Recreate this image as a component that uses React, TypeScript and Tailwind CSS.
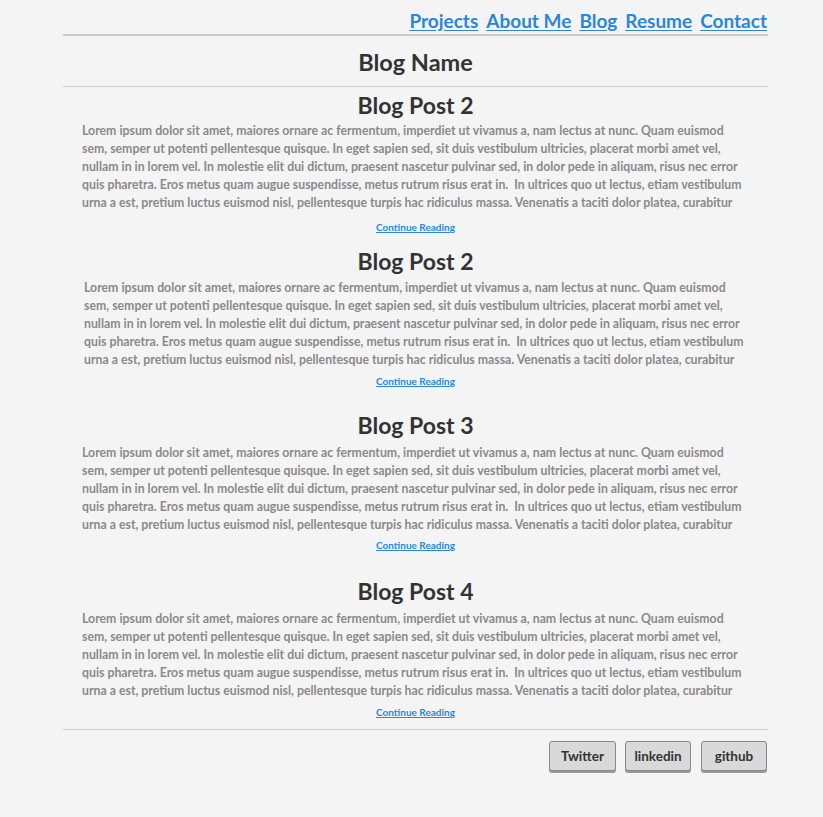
const LINES = [
  "Lorem ipsum dolor sit amet, maiores ornare ac fermentum, imperdiet ut vivamus a, nam lectus at nunc. Quam euismod",
  "sem, semper ut potenti pellentesque quisque. In eget sapien sed, sit duis vestibulum ultricies, placerat morbi amet vel,",
  "nullam in in lorem vel. In molestie elit dui dictum, praesent nascetur pulvinar sed, in dolor pede in aliquam, risus nec error",
  "quis pharetra. Eros metus quam augue suspendisse, metus rutrum risus erat in.\u00a0 In ultrices quo ut lectus, etiam vestibulum",
  "urna a est, pretium luctus euismod nisl, pellentesque turpis hac ridiculus massa. Venenatis a taciti dolor platea, curabitur",
];

// spacing per post is uneven in the original layout
const posts = [
  { id: 1, title: "Blog Post 2", top: "mt-[4px]", text: "mt-[3px] pl-[19px]", more: "mt-[7px]" },
  { id: 2, title: "Blog Post 2", top: "mt-[14px]", text: "mt-[4px] pl-[21px]", more: "mt-[4px]" },
  { id: 3, title: "Blog Post 3", top: "mt-[24px]", text: "mt-[5px] pl-[19px]", more: "mt-[3px]" },
  { id: 4, title: "Blog Post 4", top: "mt-[26px]", text: "mt-[5px] pl-[19px]", more: "mt-[4px]" },
];

const navLinks = ["Projects", "About Me", "Blog", "Resume", "Contact"];
const socials = [
  { label: "Twitter", w: "w-[67px]" },
  { label: "linkedin", w: "w-[66px] ml-[9px]" },
  { label: "github", w: "w-[66px] ml-[10px]" },
];

export default function App() {
  return (
    <div className="min-h-[817px] bg-[#f4f4f4] font-['Lato','Open_Sans',sans-serif]">
      <div className="ml-[63px] w-[705px]">
        <nav className="flex h-[36px] items-end justify-end gap-[8px] border-b-2 border-[#cccccc] pb-[2px] pr-[1px]">
          {navLinks.map((l) => (
            <a key={l} href="#" className="text-[19px] font-bold leading-[22px] text-[#2a87d8] underline underline-offset-2">
              {l}
            </a>
          ))}
        </nav>

        <header className="flex h-[51px] items-center justify-center border-b border-[#cccccc] pt-[1px]">
          <h1 className="text-[23.5px] font-bold leading-[28px] text-[#333333]">Blog Name</h1>
        </header>

        <main>
          {posts.map((p) => (
            <article key={p.id} className={p.top}>
              <h2 className="text-center text-[23px] font-bold leading-[28px] text-[#333333]">{p.title}</h2>
              <div className={`${p.text} text-[12.3px] font-bold leading-[18px] text-[#8a8a8a]`}>
                {LINES.map((line, i) => (
                  <div key={i} className="whitespace-pre">
                    {line}
                  </div>
                ))}
              </div>
              <div className={`${p.more} text-center leading-[12px]`}>
                <a href="#" className="text-[10px] font-bold leading-[12px] text-[#2a87d8] underline">
                  Continue Reading
                </a>
              </div>
            </article>
          ))}
        </main>

        <footer className="mt-[11px] flex justify-end border-t border-[#cccccc] pr-[1px] pt-[11px]">
          {socials.map((s) => (
            <button
              key={s.label}
              className={`${s.w} h-[30px] rounded-[3px] border border-[#888888] bg-[#d9d9d9] text-[13.5px] font-bold text-[#333333] shadow-[0_2px_0_#999999]`}
            >
              {s.label}
            </button>
          ))}
        </footer>
      </div>
    </div>
  );
}
